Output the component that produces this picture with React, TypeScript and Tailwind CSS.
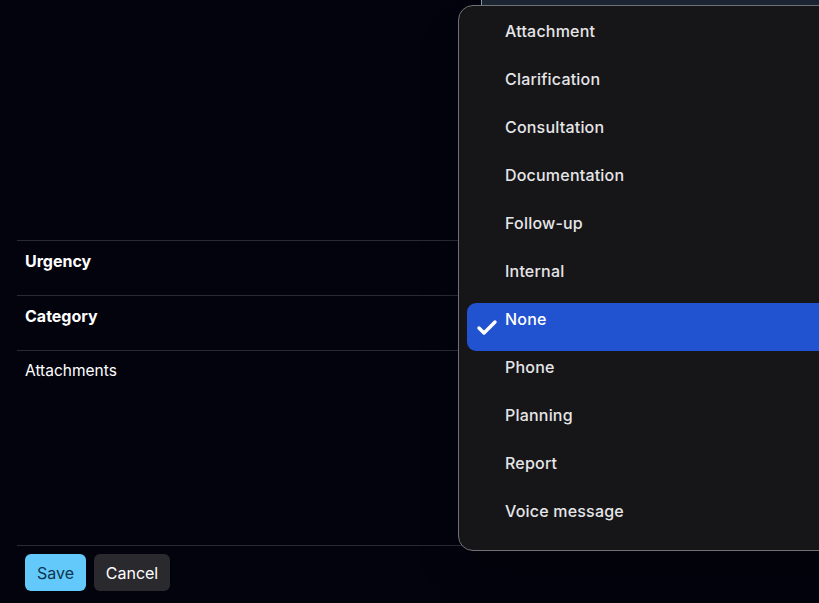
import { Check } from "lucide-react";

const options = [
  "Attachment",
  "Clarification",
  "Consultation",
  "Documentation",
  "Follow-up",
  "Internal",
  "None",
  "Phone",
  "Planning",
  "Report",
  "Voice message",
];

export default function App() {
  return (
    <div className="relative h-[603px] w-[819px] overflow-hidden bg-[#03030d] font-['Inter','Noto_Sans',sans-serif] text-white">
      {/* select box behind the open menu */}
      <div className="absolute left-[481px] top-[-30px] h-[35px] w-[360px] border-l border-[#8b93a0] bg-[#1c2532]" />

      <form className="flex h-full flex-col px-[17px]">
        <div className="h-[240px]" />
        <div className="flex h-[55px] border-t border-[#2a2a33] px-2 pt-[8px]">
          <span className="text-[16px] font-bold">Urgency</span>
        </div>
        <div className="flex h-[55px] border-t border-[#2a2a33] px-2 pt-[8px]">
          <span className="text-[16px] font-bold">Category</span>
        </div>
        <div className="flex h-[195px] border-t border-[#2a2a33] px-2 pt-[8px]">
          <span className="text-[15.5px]">Attachments</span>
        </div>
        <div className="flex gap-2 border-t border-[#2a2a33] px-2 pt-[8px]">
          <button type="button" className="h-[37px] w-[61px] rounded-md bg-[#63c9fb] text-[16px] text-[#0d3550]">
            Save
          </button>
          <button type="button" className="h-[37px] w-[76px] rounded-md bg-[#2a2a2e] text-[16px] text-white">
            Cancel
          </button>
        </div>
      </form>

      {/* open dropdown */}
      <div className="absolute left-[458px] top-[5px] w-[400px] rounded-[15px] border border-[#707076] bg-[#161619] pt-[9px] pb-[7px] pl-[8px] shadow-2xl">
        <ul className="flex flex-col">
          {options.map((o) => {
            const sel = o === "None";
            return (
              <li
                key={o}
                className={
                  sel
                    ? "flex h-[48px] items-start rounded-[9px] bg-[#2152cf] text-white"
                    : "flex h-[48px] items-start text-[#e6e6e8]"
                }
              >
                <span className="flex w-[38px] justify-center pl-[1px] pt-[13px]">
                  {sel && <Check className="h-[24px] w-[24px]" strokeWidth={3.4} />}
                </span>
                <span className="pt-[4px] text-[16px] font-medium tracking-[0.2px]">{o}</span>
              </li>
            );
          })}
        </ul>
      </div>
    </div>
  );
}
